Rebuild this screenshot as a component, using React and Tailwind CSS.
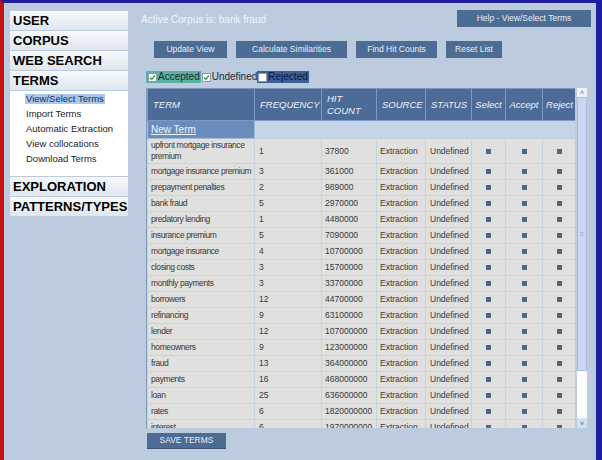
import React from 'react'

const NAV_TOP = ['USER', 'CORPUS', 'WEB SEARCH', 'TERMS']
const NAV_BOTTOM = ['EXPLORATION', 'PATTERNS/TYPES']
const SUB = ['View/Select Terms', 'Import Terms', 'Automatic Extraction', 'View collocations', 'Download Terms']

const ROWS = [
  ['upfront mortgage insurance premium', '1', '37800'],
  ['mortgage insurance premium', '3', '361000'],
  ['prepayment penalties', '2', '989000'],
  ['bank fraud', '5', '2970000'],
  ['predatory lending', '1', '4480000'],
  ['insurance premium', '5', '7090000'],
  ['mortgage insurance', '4', '10700000'],
  ['closing costs', '3', '15700000'],
  ['monthly payments', '3', '33700000'],
  ['borrowers', '12', '44700000'],
  ['refinancing', '9', '63100000'],
  ['lender', '12', '107000000'],
  ['homeowners', '9', '123000000'],
  ['fraud', '13', '364000000'],
  ['payments', '16', '468000000'],
  ['loan', '25', '636000000'],
  ['rates', '6', '1820000000'],
  ['interest', '6', '1970000000'],
]

const COLS = [
  { label: 'TERM', w: 'w-[107px]' },
  { label: 'FREQUENCY', w: 'w-[67px]' },
  { label: 'HIT COUNT', w: 'w-[55px]' },
  { label: 'SOURCE', w: 'w-[49px]' },
  { label: 'STATUS', w: 'w-[46px]' },
  { label: 'Select', w: 'w-[34px]' },
  { label: 'Accept', w: 'w-[37px]' },
  { label: 'Reject', w: 'w-[34px]' },
]

function NavHeader({ label }) {
  return (
    <div className="h-[19px] flex items-center pl-[3px] bg-gradient-to-b from-[#f7f9fc] to-[#dfe6ef] text-[13px] font-bold text-black leading-none">
      {label}
    </div>
  )
}

function Check({ checked }) {
  return (
    <span className="inline-flex items-center justify-center w-[9px] h-[9px] bg-white border border-[#8a9aa8] mr-[1px]">
      {checked && (
        <svg width="7" height="7" viewBox="0 0 7 7">
          <path d="M1 3.5 L2.8 5.3 L6 1.5" fill="none" stroke="#2a9a3a" strokeWidth="1.3" />
        </svg>
      )}
    </span>
  )
}

function Btn({ children, className = '' }) {
  return (
    <div className={`h-[17px] flex items-center justify-center bg-[#4d6c94] text-[#e8eef6] text-[8.5px] ${className}`}>
      {children}
    </div>
  )
}

function Square() {
  return <span className="inline-block w-[5px] h-[5px] bg-[#4f6788]" />
}

export default function App() {
  return (
    <div
      className="w-[602px] h-[460px] overflow-hidden flex bg-[#bccbdd] border-t-[3px] border-t-[#1e1e9e] border-l-[4px] border-l-[#c01010] border-r-[6px] border-r-[#1e1e9e] text-[#222]"
      style={{ fontFamily: '"Liberation Sans", Arial, sans-serif' }}
    >
      {/* Sidebar */}
      <div className="w-[118px] ml-[6px] mt-[8px] shrink-0 flex flex-col gap-[1px]">
        {NAV_TOP.map(l => <NavHeader key={l} label={l} />)}
        <div className="h-[85px] bg-white pl-[15px] flex flex-col">
          {SUB.map((s, i) => (
            <div key={s} className="h-[15px] flex items-center">
              <span className={`text-[9.5px] leading-[10px] px-[1px] ${i === 0 ? 'bg-[#a9c6ee] text-[#1d3050]' : 'text-[#222]'}`}>{s}</span>
            </div>
          ))}
        </div>
        {NAV_BOTTOM.map(l => <NavHeader key={l} label={l} />)}
      </div>

      {/* Main */}
      <div className="flex-1 ml-[13px] pr-[5px] flex flex-col">
        <div className="flex items-start justify-between mt-[7px] h-[17px]">
          <span className="text-[10px] text-[#f4f7fb] mt-[2px]">Active Corpus is: bank fraud</span>
          <Btn className="w-[134px]">Help - View/Select Terms</Btn>
        </div>

        <div className="flex gap-[9px] mt-[14px] ml-[13px]">
          <Btn className="w-[73px]">Update View</Btn>
          <Btn className="w-[111px]">Calculate Similarities</Btn>
          <Btn className="w-[81px]">Find Hit Counts</Btn>
          <Btn className="w-[56px]">Reset List</Btn>
        </div>

        <div className="flex items-center mt-[13px] ml-[5px] h-[12px] text-[10px] leading-none">
          <span className="flex items-center h-full bg-[#5cb1a5] pl-[2px] pr-[1px] text-[#1a2a2a]"><Check checked />Accepted</span>
          <span className="flex items-center h-full pl-[1px] text-[#1e2a36]"><Check checked />Undefined</span>
          <span className="flex items-center h-full bg-[#3c5f96] pl-[1px] pr-[1px] text-[#0c1a40]"><Check />Rejected</span>
        </div>

        <div className="flex mt-[5px] ml-[5px]">
          <div className="w-[429px] h-[340px] overflow-hidden border-l border-[#7f9cc2] bg-[#c4d3e5]">
            <table className="table-fixed border-collapse w-[429px]">
              <colgroup>
                {COLS.map(c => <col key={c.label} className={c.w} />)}
              </colgroup>
              <thead>
                <tr className="h-[32px] bg-[#4c6c97]">
                  {COLS.map((c, i) => (
                    <th
                      key={c.label}
                      className={`border border-[#7d99c0] italic font-normal text-[#eef3f9] text-[9.5px] leading-[12px] ${i < 5 ? 'text-left pl-[5px]' : 'text-center'}`}
                    >
                      {c.label === 'HIT COUNT' ? <>HIT<br />COUNT</> : c.label}
                    </th>
                  ))}
                </tr>
              </thead>
              <tbody>
                <tr className="h-[18px]">
                  <td className="bg-[#6b8dbd] border border-[#a6bcd8] pl-[3px] text-[10px] text-[#f2f6fb] underline">New Term</td>
                  <td colSpan={7} className="bg-[#c4d3e5]" />
                </tr>
                {ROWS.map((r, i) => (
                  <tr key={r[0]} className={`${i === 0 ? 'h-[25px]' : 'h-[16px]'} bg-[#e0e0de] text-[8.5px] leading-[11px] text-[#383838]`}>
                    <td className="border border-[#c5d2e0] pl-[3px] whitespace-nowrap overflow-hidden tracking-[-0.4px]">
                      {i === 0 ? <>upfront mortgage insurance<br />premium</> : r[0]}
                    </td>
                    <td className="border border-[#c5d2e0] pl-[4px]">{r[1]}</td>
                    <td className="border border-[#c5d2e0] pl-[3px]">{r[2]}</td>
                    <td className="border border-[#c5d2e0] pl-[3px]">Extraction</td>
                    <td className="border border-[#c5d2e0] pl-[4px]">Undefined</td>
                    <td className="border border-[#c5d2e0] text-center"><Square /></td>
                    <td className="border border-[#c5d2e0] text-center"><Square /></td>
                    <td className="border border-[#c5d2e0] text-center"><Square /></td>
                  </tr>
                ))}
              </tbody>
            </table>
          </div>

          {/* scrollbar */}
          <div className="w-[10px] h-[340px] ml-[2px] flex flex-col bg-white">
            <div className="h-[9px] flex items-center justify-center bg-[#eef2fa] text-[7px] text-[#5c6c90] leading-none">˄</div>
            <div className="h-[274px] bg-[#cbd8f2] border border-[#a8bbe0] flex items-center justify-center">
              <span className="text-[6px] leading-none text-[#8ea0c8]">≡</span>
            </div>
            <div className="flex-1" />
            <div className="h-[10px] flex items-center justify-center bg-[#d3dff3] text-[7px] text-[#4c5c84] leading-none">˅</div>
          </div>
        </div>

        <div className="mt-[5px] ml-[6px]">
          <div className="w-[79px] h-[16px] flex items-center justify-center bg-[#4d6c94] border-b border-[#3a5274] text-[#e8eef6] text-[8.5px]">
            SAVE TERMS
          </div>
        </div>
      </div>
    </div>
  )
}
